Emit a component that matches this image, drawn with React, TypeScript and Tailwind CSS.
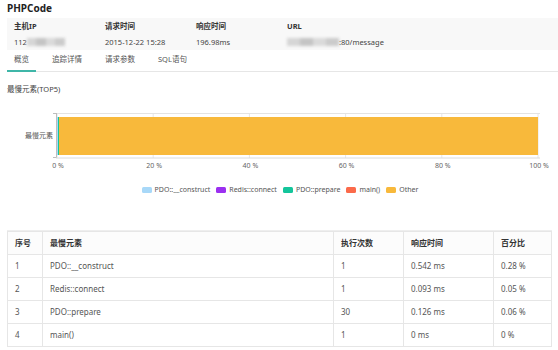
import React from "react";

const font = { fontFamily: '"Noto Sans", "Noto Sans CJK SC", sans-serif' };

const legend = [
  { name: "PDO::__construct", color: "bg-[#a8d8f8]" },
  { name: "Redis::connect", color: "bg-[#9b30f0]" },
  { name: "PDO::prepare", color: "bg-[#14c59b]" },
  { name: "main()", color: "bg-[#fb6a4a]" },
  { name: "Other", color: "bg-[#f8b93b]" },
];

const rows = [
  ["1", "PDO::__construct", "1", "0.542 ms", "0.28 %"],
  ["2", "Redis::connect", "1", "0.093 ms", "0.05 %"],
  ["3", "PDO::prepare", "30", "0.126 ms", "0.06 %"],
  ["4", "main()", "1", "0 ms", "0 %"],
];

function Blur({ w }: { w: number }) {
  return (
    <span className="inline-flex items-center gap-0 blur-[1.5px]" style={{ width: w }}>
      <span className="h-[8px] flex-1 bg-[#d6d6d6]" />
      <span className="h-[8px] flex-1 bg-[#c4c4c4]" />
      <span className="h-[8px] flex-1 bg-[#dadada]" />
      <span className="h-[8px] flex-1 bg-[#cbcbcb]" />
    </span>
  );
}

function Chart() {
  const ticks = [0, 20, 40, 60, 80, 100];
  return (
    <div className="relative h-[70px]">
      <div className="absolute left-0 top-[18px] w-[53px] text-right text-[7px] text-[#555]">最慢元素</div>
      <svg className="absolute left-0 top-0" width="558" height="60">
        {ticks.map((t) => (
          <line key={t} x1={57 + t * 4.81} x2={57 + t * 4.81} y1="0" y2="45" stroke="#e6e6e6" />
        ))}
        <line x1="54" x2="540" y1="0.5" y2="0.5" stroke="#e3e3e3" />
        <rect x="57" y="4" width="481" height="38" fill="#f8b93b" />
        <rect x="57" y="4" width="1.2" height="38" fill="#a8d8f8" />
        <rect x="58" y="4" width="1" height="38" fill="#14c59b" />
        <line x1="56.5" x2="56.5" y1="0" y2="45" stroke="#bdbdbd" />
        <line x1="53" x2="56" y1="0.5" y2="0.5" stroke="#bdbdbd" />
        <line x1="53" x2="56" y1="44.5" y2="44.5" stroke="#bdbdbd" />
        <line x1="56" x2="540" y1="45" y2="45" stroke="#dcdcdc" />
      </svg>
      {ticks.map((t) => (
        <div
          key={t}
          className="absolute top-[48px] w-[30px] -ml-[15px] text-center text-[7px] text-[#666]"
          style={{ left: 58 + t * 4.81 }}
        >
          {t} %
        </div>
      ))}
    </div>
  );
}

export default function App() {
  return (
    <div className="w-[558px] h-[350px] bg-white text-[#333] overflow-hidden" style={font}>
      <div className="pl-[7px] pt-[1px] text-[10px] font-bold leading-[14px] text-[#222]">PHPCode</div>

      <div className="ml-[7px] mt-[3px] h-[32px] bg-[#f8f8f8] grid grid-cols-[91px_91px_91px_1fr] pl-[7px] pt-[3px] text-[7.5px]">
        <div>
          <div className="font-bold leading-[10px]">主机IP</div>
          <div className="mt-[6px] flex items-center leading-[10px] text-[#444]">
            112
            <Blur w={38} />
          </div>
        </div>
        <div>
          <div className="font-bold leading-[10px]">请求时间</div>
          <div className="mt-[6px] leading-[10px] text-[#444]">2015-12-22 15:28</div>
        </div>
        <div>
          <div className="font-bold leading-[10px]">响应时间</div>
          <div className="mt-[6px] leading-[10px] text-[#444]">196.98ms</div>
        </div>
        <div>
          <div className="font-bold leading-[10px]">URL</div>
          <div className="mt-[6px] flex items-center leading-[10px] text-[#444]">
            <Blur w={52} />
            :80/message
          </div>
        </div>
      </div>

      <div className="ml-[7px] mt-[2px] flex gap-[9px] border-b border-[#e6e6e6] text-[7.5px] text-[#555]">
        <div className="px-[7px] pt-[2px] pb-[5px] border-b-2 border-[#3fb6a8] -mb-[1px]">概览</div>
        <div className="px-[7px] pt-[2px] pb-[5px]">追踪详情</div>
        <div className="px-[7px] pt-[2px] pb-[5px]">请求参数</div>
        <div className="px-[7px] pt-[2px] pb-[5px]">SQL语句</div>
      </div>

      <div className="pl-[7px] mt-[12px] text-[7.5px] text-[#444] leading-[10px]">最慢元素(TOP5)</div>

      <div className="mt-[19px]">
        <Chart />
      </div>

      <div className="mt-[2px] flex justify-center gap-[6px] text-[7px] text-[#555] leading-[10px] pl-[2px]">
        {legend.map((l) => (
          <div key={l.name} className="flex items-center gap-[3px]">
            <span className={`w-[10px] h-[6px] rounded-[1.5px] ${l.color}`} />
            {l.name}
          </div>
        ))}
      </div>

      <div className="mt-[35px] mx-[7px] w-[545px] border-t border-[#eeeeee]">
        <table className="w-full border-collapse text-[8px] text-[#555]">
          <colgroup>
            <col className="w-[35px]" />
            <col className="w-[291px]" />
            <col className="w-[70px]" />
            <col className="w-[90px]" />
            <col />
          </colgroup>
          <thead>
            <tr className="h-[23px] bg-[#fcfcfc]">
              {["序号", "最慢元素", "执行次数", "响应时间", "百分比"].map((h) => (
                <th key={h} className="border border-[#e6e6e6] px-[7px] text-left font-bold text-[#333]">
                  {h}
                </th>
              ))}
            </tr>
          </thead>
          <tbody>
            {rows.map((r) => (
              <tr key={r[0]} className="h-[23px]">
                {r.map((c, i) => (
                  <td key={i} className="border border-[#e6e6e6] px-[7px]">
                    {c}
                  </td>
                ))}
              </tr>
            ))}
          </tbody>
        </table>
      </div>
    </div>
  );
}
